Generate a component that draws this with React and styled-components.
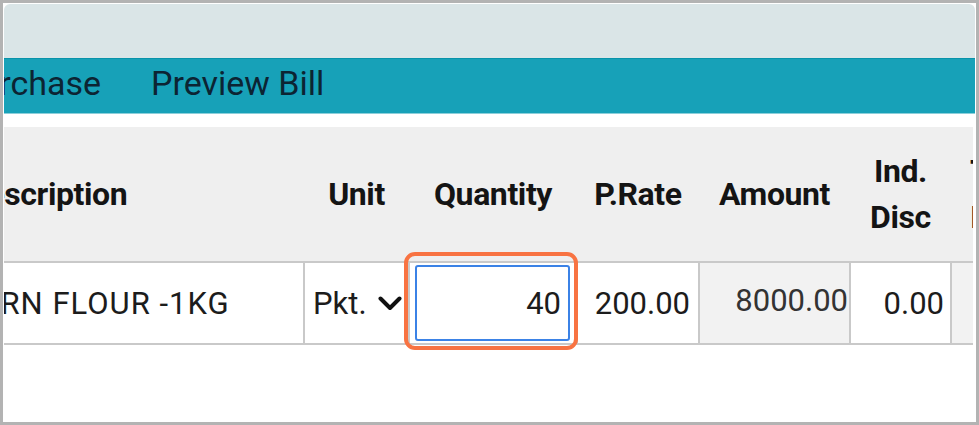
import React from 'react'
import styled, { createGlobalStyle } from 'styled-components'

const GlobalStyle = createGlobalStyle`
  html, body {
    margin: 0;
    padding: 0;
    background: #fff;
  }
  body {
    font-family: Roboto, "Noto Sans", Arial, sans-serif;
    color: #1c1c1c;
  }
`

const Frame = styled.div`
  width: 979px;
  height: 425px;
  box-sizing: border-box;
  border: 3px solid #b3b3b3;
  padding: 1px 1px 0 1px;
  background: #fff;
  overflow: hidden;
  display: flex;
  flex-direction: column;
`

const TitleBar = styled.div`
  flex-shrink: 0;
  height: 54px;
  background: #dae5e7;
  border-radius: 6px 6px 0 0;
`

const NavBar = styled.nav`
  flex-shrink: 0;
  height: 48px;
  padding-bottom: 6px;
  background: #17a1b8;
  border-top: 1px solid #0893aa;
  border-bottom: 1px solid #8ccfda;
  display: flex;
  align-items: center;
  overflow: hidden;
`

const NavList = styled.div`
  display: flex;
  gap: 50px;
  margin-left: -45px;
`

const NavItem = styled.span`
  font-size: 34px;
  color: #0c2433;
  white-space: nowrap;
`

const Spacer = styled.div`
  flex-shrink: 0;
  height: 13px;
`

const Viewport = styled.div`
  overflow: hidden;
  margin-right: 2px;
  flex: 1;
  background: #fff;
`

const Table = styled.table`
  width: 1105px;
  margin-left: -49px;
  table-layout: fixed;
  border-collapse: collapse;
`

const HeadCell = styled.th`
  height: 134px;
  padding: 0 6px 0 ${({ $padLeft }) => $padLeft ?? 6}px;
  background: #efefef;
  border-bottom: 2px solid #c9c9c9;
  font-size: 32px;
  font-weight: 700;
  line-height: 46px;
  letter-spacing: -0.4px;
  color: #141414;
  text-align: ${({ $align }) => $align || 'center'};
  vertical-align: middle;
  white-space: nowrap;
  overflow: hidden;
`

const Cell = styled.td`
  height: 74px;
  padding: 0 ${({ $pad }) => $pad ?? 8}px ${({ $raise }) => ($raise ? 6 : 0)}px ${({ $padLeft }) => $padLeft ?? 8}px;
  border: 2px solid #c9c9c9;
  border-top: none;
  background: ${({ $muted }) => ($muted ? '#f2f2f2' : '#fff')};
  font-size: 31px;
  letter-spacing: ${({ $spread }) => ($spread ? '1px' : 'normal')};
  color: ${({ $muted }) => ($muted ? '#333' : '#1c1c1c')};
  text-align: ${({ $align }) => $align || 'right'};
  vertical-align: middle;
  white-space: nowrap;
  overflow: hidden;
  position: relative;
`

const QtyCell = styled(Cell)`
  padding: 0 6px 0 5px;
  overflow: visible;
`

const Select = styled.div`
  display: flex;
  align-items: center;
  gap: 11px;

  svg {
    flex-shrink: 0;
  }
`

const QtyInput = styled.input`
  display: block;
  width: 100%;
  height: 76px;
  box-sizing: border-box;
  border: 2px solid #3b82e6;
  border-radius: 3px;
  padding: 0 7px 0 0;
  font-family: Roboto, Arial, sans-serif;
  font-size: 31px;
  color: #1c1c1c;
  text-align: right;
  background: #fff;
  outline: none;
`

const Highlight = styled.span`
  position: absolute;
  top: -11px;
  left: -6px;
  right: -2px;
  bottom: -7px;
  border: 4px solid #f87342;
  border-radius: 11px;
  pointer-events: none;
`

function Chevron() {
  return (
    <svg width="24" height="15" viewBox="0 0 24 15">
      <polyline points="2.5,2.5 12,12 21.5,2.5" fill="none" stroke="#111" strokeWidth="4" strokeLinecap="round" strokeLinejoin="round" />
    </svg>
  )
}

export default function App() {
  return (
    <>
      <GlobalStyle />
      <Frame>
        <TitleBar />
        <NavBar>
          <NavList>
            <NavItem>Purchase</NavItem>
            <NavItem>Preview Bill</NavItem>
          </NavList>
        </NavBar>
        <Spacer />
        <Viewport>
          <Table>
            <colgroup>
              <col style={{ width: 348 }} />
              <col style={{ width: 105 }} />
              <col style={{ width: 168 }} />
              <col style={{ width: 122 }} />
              <col style={{ width: 151 }} />
              <col style={{ width: 101 }} />
              <col style={{ width: 110 }} />
            </colgroup>
            <thead>
              <tr>
                <HeadCell $align="left" $padLeft={11}>Description</HeadCell>
                <HeadCell>Unit</HeadCell>
                <HeadCell>Quantity</HeadCell>
                <HeadCell>P.Rate</HeadCell>
                <HeadCell>Amount</HeadCell>
                <HeadCell>Ind.<br />Disc</HeadCell>
                <HeadCell $align="left" $padLeft={19}>Tax<br />Incl.</HeadCell>
              </tr>
            </thead>
            <tbody>
              <tr>
                <Cell $align="left" $padLeft={0} $spread>CORN FLOUR -1KG</Cell>
                <Cell $align="left" $padLeft={8} $pad={0}>
                  <Select>
                    <span>Pkt.</span>
                    <Chevron />
                  </Select>
                </Cell>
                <QtyCell>
                  <QtyInput defaultValue="40" />
                  <Highlight />
                </QtyCell>
                <Cell>200.00</Cell>
                <Cell $muted $raise $pad={1}>8000.00</Cell>
                <Cell $pad={6}>0.00</Cell>
                <Cell $muted />
              </tr>
            </tbody>
          </Table>
        </Viewport>
      </Frame>
    </>
  )
}
